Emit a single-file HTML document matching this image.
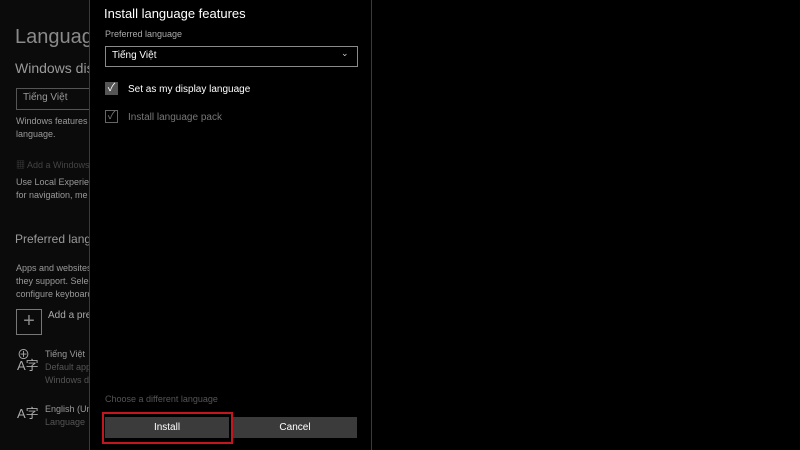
<!DOCTYPE html><html><head><style>
body{margin:0;width:800px;height:450px;background:#000;position:relative;overflow:hidden;font-family:"Liberation Sans","Noto Sans CJK SC",sans-serif;}
.l{position:absolute;left:0;top:0;width:90px;height:450px;background:#0b0b0b;overflow:hidden;color:#9a9a9a;}
.t{position:absolute;white-space:nowrap;}
.dlg{position:absolute;left:89px;top:0;width:283px;height:450px;background:#000;border-left:1px solid #3a3a3a;border-right:1px solid #3a3a3a;box-sizing:border-box;}
.btn{position:absolute;top:417px;height:21px;background:#3b3b3b;color:#fff;font-size:10px;text-align:center;line-height:21px;}
</style></head><body>
<div class="l">
<div class="t" style="left:15px;top:26px;font-size:20px;color:#8a8a8a">Language</div>
<div class="t" style="left:15px;top:60px;font-size:14px;color:#9a9a9a">Windows display</div>
<div style="position:absolute;left:16px;top:88px;width:90px;height:20px;border:1px solid #555"></div>
<div class="t" style="left:23px;top:92px;font-size:10px">Tiếng Việt</div>
<div class="t" style="left:16px;top:115px;font-size:9px;line-height:13px">Windows features<br>language.</div>
<div class="t" style="left:16px;top:158px;font-size:9px;color:#444">▦ Add a Windows</div>
<div class="t" style="left:16px;top:176px;font-size:9px;line-height:13px">Use Local Experience<br>for navigation, me</div>
<div class="t" style="left:15px;top:232px;font-size:12px">Preferred language</div>
<div class="t" style="left:16px;top:262px;font-size:9px;line-height:13px">Apps and websites<br>they support. Select<br>configure keyboard</div>
<div style="position:absolute;left:16px;top:309px;width:24px;height:24px;border:1px solid #777;color:#888;font-size:20px;text-align:center;line-height:22px">+</div>
<div class="t" style="left:48px;top:310px;font-size:10px;color:#aaa">Add a preferred</div>
<div class="t" style="left:17px;top:349px;font-size:13px;line-height:11px;color:#aaa">⊕<br>A字</div>
<div class="t" style="left:45px;top:348px;font-size:9px;line-height:13px">Tiếng Việt<br><span style="color:#555">Default app<br>Windows d</span></div>
<div class="t" style="left:17px;top:403px;font-size:13px;color:#aaa">A字</div>
<div class="t" style="left:45px;top:403px;font-size:9px;line-height:13px">English (Un<br><span style="color:#555">Language</span></div>
</div>
<div class="dlg"></div>
<div class="t" style="left:104px;top:6px;font-size:13px;color:#fff">Install language features</div>
<div class="t" style="left:105px;top:29px;font-size:9px;color:#aaa">Preferred language</div>
<div style="position:absolute;left:105px;top:46px;width:251px;height:19px;border:1px solid #8a8a8a"></div>
<div class="t" style="left:112px;top:50px;font-size:10px;color:#fff">Tiếng Việt</div>
<div class="t" style="left:341px;top:48px;font-size:9px;color:#ccc">⌄</div>
<div style="position:absolute;left:105px;top:82px;width:13px;height:13px;background:#555;color:#fff;font-size:11px;line-height:13px;text-align:center">✓</div>
<div class="t" style="left:128px;top:84px;font-size:10px;color:#fff">Set as my display language</div>
<div style="position:absolute;left:105px;top:110px;width:11px;height:11px;border:1px solid #666;color:#777;font-size:11px;line-height:11px;text-align:center">✓</div>
<div class="t" style="left:128px;top:112px;font-size:10px;color:#777">Install language pack</div>
<div class="t" style="left:105px;top:394px;font-size:9px;color:#555">Choose a different language</div>
<div class="btn" style="left:105px;width:124px">Install</div>
<div class="btn" style="left:233px;width:124px">Cancel</div>
<div style="position:absolute;left:102px;top:412px;width:127px;height:28px;border:2px solid #c4161f"></div>
</body></html>
